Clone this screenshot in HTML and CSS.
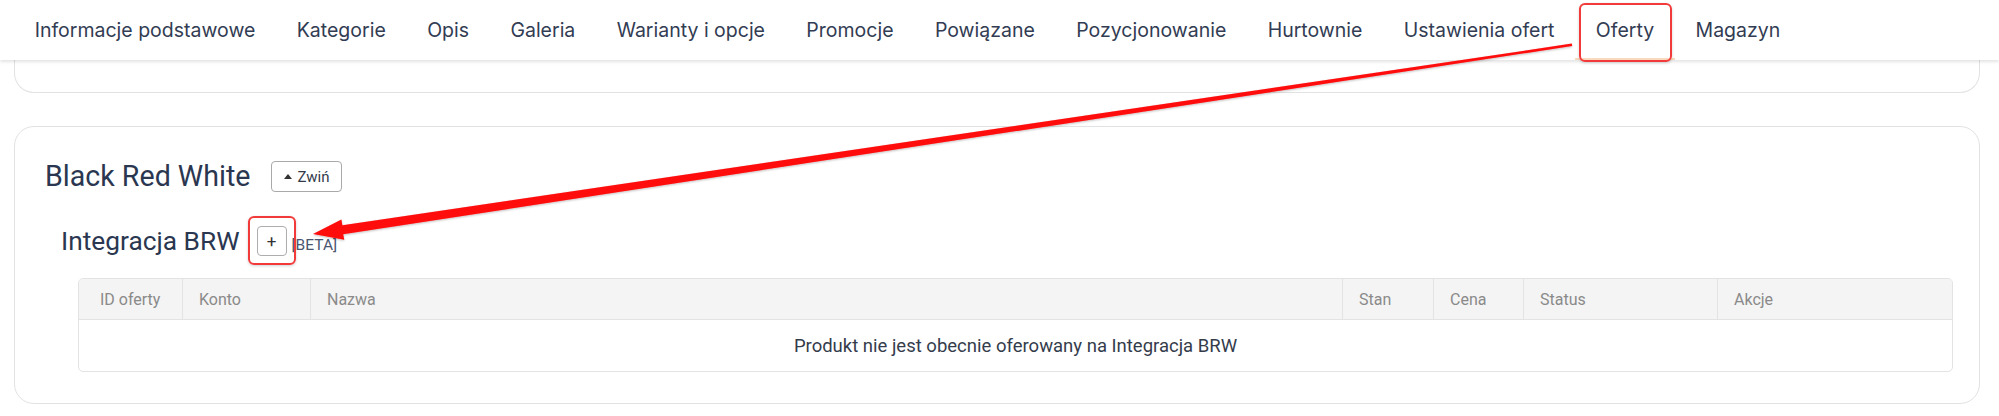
FILE: index.html
```html
<!DOCTYPE html>
<html lang="pl">
<head>
<meta charset="utf-8">
<title>Oferty</title>
<link rel="stylesheet" href="styles.css">
</head>
<body>
<nav class="tabs">
  <a class="tab">Informacje podstawowe</a>
  <a class="tab">Kategorie</a>
  <a class="tab">Opis</a>
  <a class="tab">Galeria</a>
  <a class="tab">Warianty i opcje</a>
  <a class="tab">Promocje</a>
  <a class="tab">Powiązane</a>
  <a class="tab">Pozycjonowanie</a>
  <a class="tab">Hurtownie</a>
  <a class="tab">Ustawienia ofert</a>
  <a class="tab tab-active mark">Oferty</a>
  <a class="tab">Magazyn</a>
</nav>
<main class="content">
  <section class="card card-top"></section>
  <section class="card card-main">
    <div class="card-head">
      <h2 class="card-title">Black Red White</h2>
      <button class="btn-toggle"><span class="caret"></span>Zwiń</button>
    </div>
    <div class="integration">
      <div class="int-head">
        <h3 class="int-title">Integracja BRW</h3>
        <span class="add-wrap mark"><button class="btn-add">+</button></span>
        <span class="beta">[BETA]</span>
      </div>
      <table class="offers">
        <colgroup>
          <col class="c-id"><col class="c-acc"><col class="c-name"><col class="c-stan"><col class="c-cena"><col class="c-status"><col class="c-akcje">
        </colgroup>
        <thead>
          <tr>
            <th class="th-first">ID oferty</th>
            <th>Konto</th>
            <th>Nazwa</th>
            <th>Stan</th>
            <th>Cena</th>
            <th>Status</th>
            <th>Akcje</th>
          </tr>
        </thead>
        <tbody>
          <tr>
            <td colspan="7" class="empty">Produkt nie jest obecnie oferowany na Integracja BRW</td>
          </tr>
        </tbody>
      </table>
    </div>
  </section>
</main>
<svg class="arrow" width="1999" height="416" viewBox="0 0 1999 416">
  <defs>
    <filter id="sh" x="-5%" y="-20%" width="110%" height="140%">
      <feDropShadow dx="0" dy="1" stdDeviation="1.2" flood-color="#000" flood-opacity="0.25"/>
    </filter>
  </defs>
  <polygon filter="url(#sh)" fill="#ff0a0a" points="1571.8,43.6 342.4,225.3 341.4,219.6 313,234 344.3,239.8 343.2,234.2 1572.2,46"/>
</svg>
</body>
</html>
```
FILE: styles.css
```css
* { box-sizing: border-box; }

html, body {
  margin: 0;
  padding: 0;
  background: #ffffff;
}

body {
  position: relative;
  width: 1999px;
  height: 416px;
  overflow: hidden;
  font-family: Roboto, "Liberation Sans", sans-serif;
  color: #2c3850;
}

.tabs {
  position: relative;
  z-index: 2;
  display: flex;
  align-items: stretch;
  height: 60px;
  padding-left: 14px;
  background: #ffffff;
  box-shadow: 0 2px 3px rgba(0, 0, 0, 0.11);
  font-family: Inter, "Noto Sans", sans-serif;
  font-size: 19.5px;
  color: #323c53;
}

.tab {
  position: relative;
  display: flex;
  align-items: center;
  padding: 0 20.7px;
  white-space: nowrap;
}

.tab-active {
  box-shadow: inset 0 -2px 0 rgba(240, 150, 70, 0.35);
}

.mark::after {
  content: "";
  position: absolute;
  border: 2px solid #f23a3a;
  border-radius: 6px;
  box-shadow: 0 1px 3px rgba(0, 0, 0, 0.18);
  pointer-events: none;
}

.tab.mark::after {
  left: 4px;
  right: 3px;
  top: 3px;
  bottom: -2px;
}

.content {
  padding: 0 19px 0 14px;
}

.card {
  border: 1px solid #e2e2e2;
  border-radius: 20px;
  background: #ffffff;
}

.card-top {
  height: 33px;
  border-top: none;
  border-top-left-radius: 0;
  border-top-right-radius: 0;
}

.card-main {
  margin-top: 33px;
  padding: 34px 28px 31px 30px;
}

.card-head {
  display: flex;
  align-items: center;
  height: 31px;
  gap: 21px;
}

.card-title {
  margin: 0;
  font-size: 28.6px;
  font-weight: 400;
  line-height: 31px;
  color: #2b3750;
}

.btn-toggle {
  display: flex;
  align-items: center;
  justify-content: center;
  gap: 5px;
  width: 71px;
  height: 31px;
  padding: 0;
  border: 1px solid #a9a9a9;
  border-radius: 4px;
  background: #ffffff;
  font-family: Roboto, "Liberation Sans", sans-serif;
  font-size: 15px;
  color: #333b4b;
}

.caret {
  width: 0;
  height: 0;
  border-left: 4px solid transparent;
  border-right: 4px solid transparent;
  border-bottom: 5px solid #333;
  margin-top: -1px;
}

.integration {
  margin-top: 34px;
}

.int-head {
  display: flex;
  align-items: center;
  height: 30px;
  padding-left: 16px;
}

.int-title {
  margin: 0;
  font-size: 26.3px;
  font-weight: 400;
  line-height: 30px;
  color: #2b3750;
}

.add-wrap {
  position: relative;
  display: flex;
  margin-left: 17px;
}

.add-wrap.mark::after {
  left: -9px;
  right: -9px;
  top: -10px;
  bottom: -9px;
}

.btn-add {
  width: 30px;
  height: 30px;
  padding: 0;
  border: 1px solid #adadad;
  border-radius: 4px;
  background: #ffffff;
  font-family: Roboto, "Liberation Sans", sans-serif;
  font-size: 17px;
  line-height: 26px;
  color: #333;
}

.beta {
  margin-left: 5px;
  margin-top: 7px;
  font-size: 15.5px;
  color: #4a5670;
}

.offers {
  width: 1873px;
  margin: 22px 0 0 33px;
  border: 1px solid #e3e3e3;
  border-radius: 5px;
  border-collapse: separate;
  border-spacing: 0;
  table-layout: fixed;
  overflow: hidden;
}

.c-id { width: 103px; }
.c-acc { width: 128px; }
.c-name { width: 1032px; }
.c-stan { width: 91px; }
.c-cena { width: 90px; }
.c-status { width: 194px; }
.c-akcje { width: 235px; }

.offers th {
  height: 41px;
  padding: 0 16px;
  background: #f4f4f4;
  border-bottom: 1px solid #e3e3e3;
  border-left: 1px solid #e3e3e3;
  text-align: left;
  font-size: 16px;
  font-weight: 400;
  color: #8a8a8a;
  white-space: nowrap;
}

.offers th.th-first {
  border-left: none;
  padding-left: 21px;
}

.offers td.empty {
  height: 51px;
  padding: 0;
  text-align: center;
  font-size: 18.5px;
  color: #343c4c;
}

.arrow {
  position: absolute;
  left: 0;
  top: 0;
  z-index: 5;
  pointer-events: none;
}
```
